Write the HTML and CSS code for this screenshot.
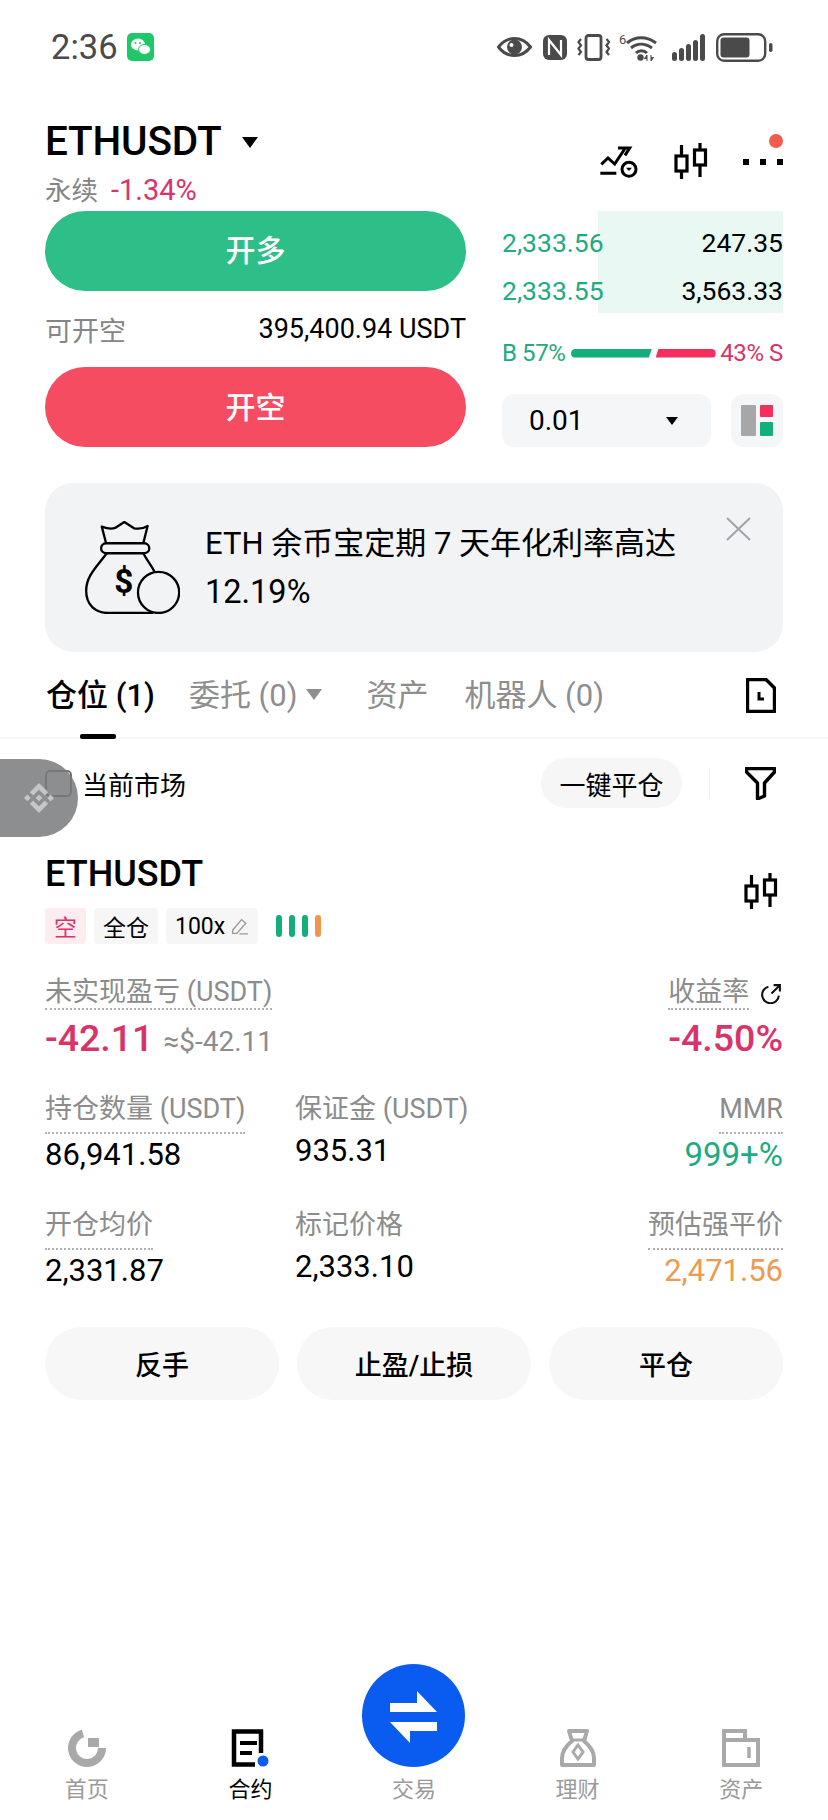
FILE: index.html
```html
<!DOCTYPE html>
<html lang="zh-CN">
<head>
    <meta charset="UTF-8">
    <title>ETHUSDT 合约</title>
    <link rel="stylesheet" href="styles.css">
</head>
<body>
<div class="page">

    <!-- status bar -->
    <div class="status">
        <span class="status-time">2:36</span>
        <svg class="wechat" viewBox="0 0 27 28">
            <rect width="27" height="28" rx="5" fill="#1fc768"/>
            <ellipse cx="11" cy="11.5" rx="7" ry="6" fill="#fff"/>
            <ellipse cx="17.5" cy="16.5" rx="6" ry="5" fill="#fff" stroke="#1fc768"/>
            <circle cx="8.5" cy="10" r="1" fill="#1fc768"/>
            <circle cx="13" cy="10" r="1" fill="#1fc768"/>
        </svg>
        <div class="status-icons">
            <svg class="ic-eye" viewBox="0 0 35 20">
                <path d="M1.500 10C6 4 11 1.500 17.500 1.500S29 4 33.500 10C29 16 24 18.500 17.500 18.500S6 16 1.500 10Z" fill="none" stroke="#4a4a4a" stroke-width="3"/>
                <circle cx="17.500" cy="10" r="7.500" fill="#4a4a4a"/>
                <circle cx="14.500" cy="8" r="2" fill="#fff"/>
            </svg>
            <svg class="ic-nfc" viewBox="0 0 24 25">
                <rect width="24" height="25" rx="6" fill="#4a4a4a"/>
                <path d="M6 20V5l12 15V5" fill="none" stroke="#fff" stroke-width="2.200"/>
            </svg>
            <svg class="ic-vib" viewBox="0 0 33 27">
                <rect x="9" y="1.500" width="15" height="24" rx="2.500" fill="none" stroke="#4a4a4a" stroke-width="2.800"/>
                <path d="M4 5l-2.500 3L4 11.500l-2.500 3L4 18l-2.500 3M29.500 5L32 8l-2.500 3.500L32 14.500 29.500 18l2.500 3" fill="none" stroke="#4a4a4a" stroke-width="2.200"/>
            </svg>
            <svg class="ic-wifi" viewBox="0 0 38 28">
                <text x="0" y="11" class="wifi-six">6</text>
                <path d="M8 10C16 3 28 3 37 10M12 15C18 10 26 10 33 15M17 20C20 17 25 17 28 20" fill="none" stroke="#4a4a4a" stroke-width="3"/>
                <circle cx="21.500" cy="24.500" r="3.200" fill="#4a4a4a"/>
                <path d="M28 28v-6l-2.500 3.500H28M32 22v6l2.500-3.500H32" fill="#4a4a4a" stroke="#4a4a4a"/>
            </svg>
            <svg class="ic-signal" viewBox="0 0 33 27">
                <rect x="0" y="18" width="5" height="9" rx="2.500" fill="#4a4a4a"/>
                <rect x="7" y="14" width="5" height="13" rx="2.500" fill="#4a4a4a"/>
                <rect x="14" y="10" width="5" height="17" rx="2.500" fill="#4a4a4a"/>
                <rect x="21" y="6" width="5" height="21" rx="2.500" fill="#4a4a4a"/>
                <rect x="28" y="0" width="5" height="27" rx="2.500" fill="#4a4a4a"/>
            </svg>
            <svg class="ic-battery" viewBox="0 0 57 29">
                <rect x="1.200" y="1.200" width="48" height="26.600" rx="7" fill="none" stroke="#4a4a4a" stroke-width="2.400"/>
                <rect x="4.500" y="4.500" width="29" height="20" rx="3" fill="#4a4a4a"/>
                <rect x="53" y="10" width="3.500" height="9" rx="1.700" fill="#4a4a4a"/>
            </svg>
        </div>
    </div>

    <div class="main">

        <!-- symbol header -->
        <div class="ticker">
            <div>
                <div class="ticker-name">ETHUSDT<span class="caret"></span></div>
                <div class="ticker-sub"><span class="muted">永续</span><span class="red ticker-change">-1.34%</span></div>
            </div>
            <div class="ticker-tools">
                <svg class="ic-chart" viewBox="58 76 120 96">
                    <path d="M65 131l20-19 20 18 30-45M115 82h35l-14 22M62 158h48" fill="none" stroke="#000" stroke-width="9"/>
                    <circle cx="148" cy="146" r="21" fill="none" stroke="#000" stroke-width="9"/>
                    <path d="M139 141h18l-9 10z"/>
                </svg>
                <svg class="ic-candles" viewBox="0 0 34 36">
                    <path d="M7.500 2v34M26 0v34" stroke="#000" stroke-width="3.200"/>
                    <rect x="2" y="13" width="11" height="15" fill="#fff" stroke="#000" stroke-width="3.200"/>
                    <rect x="20.500" y="7" width="11" height="15" fill="#fff" stroke="#000" stroke-width="3.200"/>
                </svg>
                <div class="more">
                    <i></i><i></i><i></i>
                    <span class="more-dot"></span>
                </div>
            </div>
        </div>

        <!-- long / short + book -->
        <div class="trade">
            <div class="trade-left">
                <button class="btn-long">开多</button>
                <div class="avail">
                    <span class="muted">可开空</span>
                    <span>395,400.94 USDT</span>
                </div>
                <button class="btn-short">开空</button>
            </div>
            <div class="trade-right">
                <div class="book">
                    <div class="book-row"><span class="green">2,333.56</span><span>247.35</span></div>
                    <div class="book-row"><span class="green">2,333.55</span><span>3,563.33</span></div>
                </div>
                <div class="ratio">
                    <span class="green">B 57%</span>
                    <span class="ratio-buy"></span>
                    <span class="ratio-sell"></span>
                    <span class="red">43% S</span>
                </div>
                <div class="size">
                    <div class="size-box">
                        <span>0.01</span>
                        <span class="size-caret"></span>
                    </div>
                    <div class="layout-btn">
                        <i class="lay-gray"></i>
                        <i class="lay-red"></i>
                        <i class="lay-green"></i>
                    </div>
                </div>
            </div>
        </div>

        <!-- promo -->
        <div class="banner">
            <svg class="bag" viewBox="75 60 285 280">
                <g fill="none" stroke="#000" stroke-width="7" stroke-linejoin="round">
                    <path d="M138 127L125 77Q150 86 165 81L193 63L222 82Q245 86 263 75L250 127"/>
                    <rect x="123" y="127" width="145" height="30" rx="15"/>
                    <path d="M140 157C110 198 78 225 78 270C78 312 105 337 145 337H280"/>
                    <path d="M250 157C262 180 275 195 285 215"/>
                    <circle cx="296" cy="275" r="62" fill="#f2f3f5"/>
                </g>
                <text x="191" y="278" class="bag-dollar">$</text>
            </svg>
            <div class="banner-text">ETH 余币宝定期 7 天年化利率高达<br><span class="banner-rate">12.19%</span></div>
            <svg class="banner-close" viewBox="0 0 25 24">
                <path d="M1 1l23 22M24 1L1 23" stroke="#a0a3a8" stroke-width="2"/>
            </svg>
        </div>

        <!-- tabs -->
        <div class="tabs">
            <span class="tab tab-active">仓位 (1)</span>
            <span class="tab tab-orders">委托 (0)<i class="tab-caret"></i></span>
            <span class="tab tab-assets">资产</span>
            <span class="tab tab-bots">机器人 (0)</span>
            <svg class="ic-doc" viewBox="0 0 30 35">
                <path d="M1.500 1.500H20L28.500 10V33.500H1.500Z" fill="none" stroke="#000" stroke-width="3.400" stroke-linejoin="round"/>
                <path d="M13 14v7h5" fill="none" stroke="#000" stroke-width="3"/>
            </svg>
        </div>

        <!-- filter row -->
        <div class="filter-row">
            <span class="checkbox"></span>
            <span class="filter-label">当前市场</span>
            <span class="close-all">一键平仓</span>
            <span class="filter-sep"></span>
            <svg class="ic-filter" viewBox="0 0 31 33">
                <path d="M1.500 1.500H29.500V5L19.500 16V29L12.500 32V16L1.500 5Z" fill="none" stroke="#000" stroke-width="3.400" stroke-linejoin="round"/>
            </svg>
        </div>

        <!-- position card -->
        <div class="pos-head">
            <div>
                <div class="pos-name">ETHUSDT</div>
                <div class="tags">
                    <span class="tag tag-short">空</span>
                    <span class="tag">全仓</span>
                    <span class="tag tag-lev">100x
                        <svg class="ic-pencil" viewBox="0 0 17 16">
                            <path d="M1.500 11.500L10 1.500l4 3.500-8.500 9.500H1.500ZM8 15h8" fill="none" stroke="#9a9a9a" stroke-width="1.300"/>
                        </svg>
                    </span>
                    <span class="risk"><i></i><i></i><i></i><i class="risk-warn"></i></span>
                </div>
            </div>
            <svg class="ic-candles ic-candles-pos" viewBox="0 0 34 36">
                <path d="M7.500 2v34M26 0v34" stroke="#000" stroke-width="3.200"/>
                <rect x="2" y="13" width="11" height="15" fill="#fff" stroke="#000" stroke-width="3.200"/>
                <rect x="20.500" y="7" width="11" height="15" fill="#fff" stroke="#000" stroke-width="3.200"/>
            </svg>
        </div>

        <div class="pnl">
            <div>
                <span class="stat-label dotted tight">未实现盈亏 (USDT)</span>
                <div class="pnl-value"><span class="red">-42.11</span><span class="pnl-usd">≈$-42.11</span></div>
            </div>
            <div class="right">
                <div class="pnl-rate">
                    <span class="stat-label dotted tight">收益率</span>
                    <svg class="ic-share" viewBox="0 0 21 20">
                        <path d="M8 3.500A8 8 0 1 0 18 12M13 2h6v6M19 2l-8 8" fill="none" stroke="#111" stroke-width="2"/>
                    </svg>
                </div>
                <div class="pnl-value red">-4.50%</div>
            </div>
        </div>

        <div class="stats">
            <div>
                <span class="stat-label dotted">持仓数量 (USDT)</span>
                <div class="stat-value">86,941.58</div>
            </div>
            <div>
                <span class="stat-label">保证金 (USDT)</span>
                <div class="stat-value plain">935.31</div>
            </div>
            <div class="right">
                <span class="stat-label dotted">MMR</span>
                <div class="stat-value stat-mmr green">999+%</div>
            </div>
            <div>
                <span class="stat-label dotted">开仓均价</span>
                <div class="stat-value">2,331.87</div>
            </div>
            <div>
                <span class="stat-label">标记价格</span>
                <div class="stat-value plain">2,333.10</div>
            </div>
            <div class="right">
                <span class="stat-label dotted">预估强平价</span>
                <div class="stat-value orange">2,471.56</div>
            </div>
        </div>

        <div class="actions">
            <button>反手</button>
            <button>止盈/止损</button>
            <button>平仓</button>
        </div>
    </div>

    <!-- bottom nav -->
    <div class="nav">
        <div class="nav-item">
            <svg class="nav-icon" viewBox="0 0 38 38">
                <path d="M15 4.500A15 15 0 1 0 34 19" fill="none" stroke="#a9a9a9" stroke-width="8"/>
                <rect x="20" y="9" width="11" height="9" fill="#a9a9a9"/>
            </svg>
            <span>首页</span>
        </div>
        <div class="nav-item nav-active">
            <svg class="nav-icon" viewBox="0 0 38 38">
                <path d="M30 24V2.500H3V35.500H24" fill="none" stroke="#000" stroke-width="4.500"/>
                <path d="M9 12h17v4H9zM9 22h12v4H9z"/>
                <circle cx="32" cy="32" r="5.500" fill="#0a5cf0"/>
            </svg>
            <span>合约</span>
        </div>
        <div class="nav-item">
            <svg class="swap" viewBox="0 0 103 103">
                <circle cx="51.500" cy="51.500" r="51.500" fill="#0a5cf0"/>
                <path d="M28 39H55V27L75 48H28ZM75 58H28L48 79V67H75Z" fill="#fff"/>
            </svg>
            <span>交易</span>
        </div>
        <div class="nav-item">
            <svg class="nav-icon" viewBox="0 0 38 38">
                <path d="M10 2H28L25 12C31 17 35 23 35 29V36H3V29C3 23 7 17 13 12Z" fill="none" stroke="#a9a9a9" stroke-width="4" stroke-linejoin="round"/>
                <path d="M19 16l5 7-5 7-5-7z" fill="none" stroke="#a9a9a9" stroke-width="3"/>
                <path d="M11 11h16" stroke="#a9a9a9" stroke-width="3"/>
            </svg>
            <span>理财</span>
        </div>
        <div class="nav-item">
            <svg class="nav-icon" viewBox="0 0 38 38">
                <path d="M2 2H23V11H36V36H2ZM2 11H23" fill="none" stroke="#a9a9a9" stroke-width="4"/>
                <path d="M27 18v11" stroke="#a9a9a9" stroke-width="3.500"/>
            </svg>
            <span>资产</span>
        </div>
    </div>

    <!-- floating widget over the list -->
    <div class="float-tab">
        <svg class="float-logo" viewBox="0 0 24 24">
            <path fill="#c4c6c8" d="M16.624 13.920l2.718 2.720-7.353 7.353-7.353-7.352 2.717-2.720 4.636 4.660 4.635-4.660zm4.637-4.660L24 12l-2.715 2.716L18.568 12l2.693-2.740zm-9.272 0l2.716 2.692-2.717 2.717L9.272 12l2.716-2.740zm-9.273 0L5.410 12l-2.692 2.692L0 12l2.716-2.740zM11.990.010l7.352 7.330-2.717 2.715-4.636-4.636-4.635 4.660-2.717-2.716L11.989.011z"/>
        </svg>
    </div>
</div>
</body>
</html>
```

FILE: styles.css
```css
* {
    box-sizing: border-box;
}

body {
    margin: 0;
    background: #fff;
    color: #000;
    font-family: Roboto, "Noto Sans CJK SC", sans-serif;
}

button {
    font-family: inherit;
    border: none;
}

svg {
    display: block;
    flex: none;
}

.page {
    position: relative;
    width: 828px;
    height: 1820px;
    display: flex;
    flex-direction: column;
    overflow: hidden;
}

.muted { color: #858585; }
.red { color: #d9336a; }
.green { color: #1fab80; }
.orange { color: #ee9a50; }
.right { text-align: right; }

/* status bar */
.status {
    height: 94px;
    padding: 0 55px 0 51px;
    display: flex;
    align-items: center;
    color: #4a4a4a;
}

.status-time {
    font-size: 34.5px;
    width: 76px;
}

.wechat {
    width: 27px;
    height: 28px;
}

.status-icons {
    margin-left: auto;
    display: flex;
    align-items: center;
}

.ic-eye { width: 35px; height: 20px; }
.ic-nfc { width: 24px; height: 25px; margin-left: 11px; }
.ic-vib { width: 33px; height: 27px; margin-left: 10px; }
.ic-wifi { width: 38px; height: 28px; margin-left: 9px; }
.ic-signal { width: 33px; height: 27px; margin-left: 15px; }
.ic-battery { width: 57px; height: 29px; margin-left: 11px; }

.wifi-six {
    font-size: 13px;
    font-family: Roboto, sans-serif;
    fill: #4a4a4a;
}

.main {
    padding: 0 45px;
}

/* symbol header */
.ticker {
    height: 117px;
    padding-top: 24px;
    display: flex;
    justify-content: space-between;
}

.ticker-name {
    font-size: 40.5px;
    font-weight: 500;
    line-height: 47px;
    display: flex;
    align-items: center;
    gap: 21px;
    letter-spacing: -0.2px;
}

.caret {
    width: 0;
    height: 0;
    margin-top: 2px;
    border-left: 8px solid transparent;
    border-right: 8px solid transparent;
    border-top: 11px solid #000;
}

.ticker-sub {
    margin-top: 10px;
    font-size: 26.5px;
    line-height: 30px;
}

.ticker-change {
    margin-left: 13px;
    font-size: 29px;
}

.ticker-tools {
    display: flex;
    align-items: flex-start;
    margin-top: 25px;
}

.ic-chart {
    width: 40px;
    height: 32px;
    margin-top: 3px;
    margin-right: 2px;
}

.ic-candles {
    width: 34px;
    height: 36px;
    margin-left: 33px;
}

.more {
    position: relative;
    width: 40px;
    margin-left: 35px;
    margin-top: 16px;
    display: flex;
    justify-content: space-between;
}

.more i {
    width: 6px;
    height: 6px;
    background: #000;
}

.more-dot {
    position: absolute;
    right: 0;
    top: -25px;
    width: 14px;
    height: 14px;
    border-radius: 50%;
    background: #f25c4d;
}

/* long / short */
.trade {
    display: flex;
    justify-content: space-between;
}

.trade-left {
    width: 421px;
}

.btn-long,
.btn-short {
    display: block;
    width: 100%;
    height: 80px;
    border-radius: 40px;
    color: #fff;
    font-size: 30px;
    font-weight: 500;
}

.btn-long {
    background: #2ebf88;
    padding-bottom: 7px;
}

.btn-short {
    background: #f64c62;
    padding-bottom: 5px;
}

.avail {
    height: 76px;
    display: flex;
    justify-content: space-between;
    align-items: center;
    font-size: 27px;
}

.trade-right {
    width: 281px;
    font-size: 26.5px;
}

.book {
    height: 102px;
    padding-top: 7px;
    background: linear-gradient(to left, #e9f8f3 185px, transparent 185px);
}

.book-row {
    height: 48px;
    display: flex;
    justify-content: space-between;
    align-items: center;
}

.ratio {
    margin-top: 28px;
    height: 24px;
    display: flex;
    align-items: center;
    justify-content: space-between;
    font-size: 24px;
    letter-spacing: -0.4px;
}

.ratio-buy {
    width: 81px;
    height: 9px;
    margin-left: 5px;
    background: #14ad7c;
    border-radius: 5px 0 0 5px;
    clip-path: polygon(0 0, 100% 0, 96% 100%, 0 100%);
}

.ratio-sell {
    width: 60px;
    height: 9px;
    margin: 0 4px 0 3px;
    background: #f62e5c;
    border-radius: 0 5px 5px 0;
    clip-path: polygon(5% 0, 100% 0, 100% 100%, 0 100%);
}

.size {
    margin-top: 29px;
    display: flex;
    justify-content: space-between;
    font-size: 28px;
}

.size-box {
    width: 209px;
    height: 53px;
    padding: 0 33px 0 27px;
    border-radius: 12px;
    background: #f5f6f7;
    display: flex;
    justify-content: space-between;
    align-items: center;
}

.size-caret {
    width: 0;
    height: 0;
    border-left: 6px solid transparent;
    border-right: 6px solid transparent;
    border-top: 8px solid #000;
}

.layout-btn {
    width: 52px;
    height: 53px;
    padding: 11px 10px;
    border-radius: 12px;
    background: #f5f6f7;
    display: grid;
    grid-template-columns: 15px 13px;
    grid-template-rows: 12px 14px;
    gap: 5px 4px;
}

.layout-btn i {
    border-radius: 1px;
}

.lay-gray {
    grid-row: span 2;
    background: #a7a7a7;
}

.lay-red { background: #f62e5c; }
.lay-green { background: #14ad7c; }

/* promo */
.banner {
    margin-top: 36px;
    height: 169px;
    padding: 0 32px 0 40px;
    border-radius: 28px;
    background: #f2f3f5;
    display: flex;
    align-items: center;
}

.bag {
    width: 95px;
    height: 93px;
}

.bag-dollar {
    font-family: Roboto, sans-serif;
    font-size: 100px;
    font-weight: 700;
    text-anchor: middle;
}

.banner-text {
    margin-left: 25px;
    font-size: 31px;
    line-height: 49px;
}

.banner-rate {
    font-size: 32.5px;
}

.banner-close {
    width: 25px;
    height: 24px;
    margin-left: auto;
    align-self: flex-start;
    margin-top: 34px;
}

/* tabs */
.tabs {
    height: 87px;
    margin: 0 -45px;
    padding: 0 52px 4px 46px;
    border-bottom: 2px solid #f7f7f7;
    display: flex;
    align-items: center;
    font-size: 31px;
    color: #8e8e8e;
}

.tab {
    position: relative;
    display: flex;
    align-items: center;
    white-space: pre;
}

.tab-active {
    color: #000;
    font-weight: 500;
}

.tab-active::after {
    content: "";
    position: absolute;
    left: 34px;
    top: 64px;
    width: 36px;
    height: 5px;
    border-radius: 2px;
    background: #000;
}

.tab-orders { margin-left: 34px; }
.tab-assets { margin-left: 44px; }
.tab-bots { margin-left: 36px; }

.tab-caret {
    margin: 3px 0 0 9px;
    width: 0;
    height: 0;
    border-left: 8px solid transparent;
    border-right: 8px solid transparent;
    border-top: 11px solid #8e8e8e;
}

.ic-doc {
    width: 30px;
    height: 35px;
    margin: 6px 0 0 auto;
}

/* filter row */
.filter-row {
    margin-top: 19px;
    height: 50px;
    display: flex;
    align-items: center;
    font-size: 26px;
}

.checkbox {
    width: 27px;
    height: 27px;
    border: 2px solid #6f6f6f;
    border-radius: 5px;
}

.filter-label {
    margin-left: 10px;
}

.close-all {
    margin-left: auto;
    height: 50px;
    width: 141px;
    border-radius: 25px;
    background: #f6f6f6;
    display: flex;
    justify-content: center;
    align-items: center;
}

.filter-sep {
    width: 1px;
    height: 30px;
    margin-left: 27px;
    background: #f0f0f0;
}

.ic-filter {
    width: 31px;
    height: 33px;
    margin-left: 35px;
    margin-right: 7px;
}

/* position card */
.pos-head {
    margin-top: 46px;
    display: flex;
    justify-content: space-between;
    align-items: flex-start;
}

.pos-name {
    font-size: 36px;
    font-weight: 500;
    line-height: 40px;
}

.tags {
    margin-top: 14px;
    display: flex;
    align-items: center;
    gap: 8px;
}

.tag {
    height: 36px;
    padding: 0 9px;
    border-radius: 3px;
    background: #f6f6f6;
    font-size: 23px;
    display: flex;
    align-items: center;
}

.tag-short {
    background: #fdecf0;
    color: #d9336a;
}

.tag-lev {
    gap: 6px;
}

.ic-pencil {
    width: 18px;
    height: 17px;
}

.risk {
    margin-left: 10px;
    display: flex;
    gap: 7px;
}

.risk i {
    width: 6px;
    height: 22px;
    border-radius: 3px;
    background: #14ad7c;
}

.risk .risk-warn {
    background: #f0954a;
}

.ic-candles-pos {
    margin: 19px 5px 0 0;
}

.pnl {
    margin-top: 33px;
    display: flex;
    justify-content: space-between;
}

.stat-label {
    display: inline-block;
    font-size: 27px;
    line-height: 30px;
    color: #8c8c8c;
    padding-bottom: 8px;
}

.dotted {
    border-bottom: 2px dotted #b0b0b0;
}

.tight {
    padding-bottom: 1px;
}

.pnl-value {
    margin-top: 8px;
    font-size: 37.5px;
    font-weight: 500;
    line-height: 40px;
}

.pnl-usd {
    margin-left: 10px;
    font-size: 28px;
    font-weight: 400;
    color: #8c8c8c;
}

.pnl-rate {
    display: flex;
    align-items: center;
    gap: 11px;
}

.ic-share {
    width: 22px;
    height: 21px;
}

.stats {
    margin-top: 32px;
    display: grid;
    grid-template-columns: 250px 1fr auto;
    row-gap: 35px;
}

.stat-value {
    margin-top: 1px;
    font-size: 31px;
    line-height: 40px;
}

.stat-value.plain {
    margin-top: -1px;
}

.stat-mmr {
    font-size: 33px;
}

.actions {
    margin-top: 36px;
    display: flex;
    gap: 18px;
}

.actions button {
    flex: 1;
    height: 73px;
    border-radius: 36px;
    background: #f7f7f7;
    color: #000;
    font-size: 27px;
    font-weight: 500;
}

/* bottom nav */
.nav {
    margin-top: auto;
    height: 156px;
    padding: 0 5px 16px;
    display: grid;
    grid-template-columns: repeat(5, 1fr);
    font-size: 22px;
    color: #9a9a9a;
}

.nav-item {
    display: flex;
    flex-direction: column;
    align-items: center;
    justify-content: flex-end;
    line-height: 30px;
    gap: 8px;
}

.nav-active {
    color: #000;
}

.nav-icon {
    width: 38px;
    height: 38px;
}

.swap {
    width: 103px;
    height: 103px;
}

/* floating widget */
.float-tab {
    position: absolute;
    left: 0;
    top: 759px;
    width: 78px;
    height: 78px;
    border-radius: 0 39px 39px 0;
    background: rgba(120, 122, 124, 0.85);
    display: flex;
    justify-content: center;
    align-items: center;
}

.float-logo {
    width: 30px;
    height: 30px;
}
```
